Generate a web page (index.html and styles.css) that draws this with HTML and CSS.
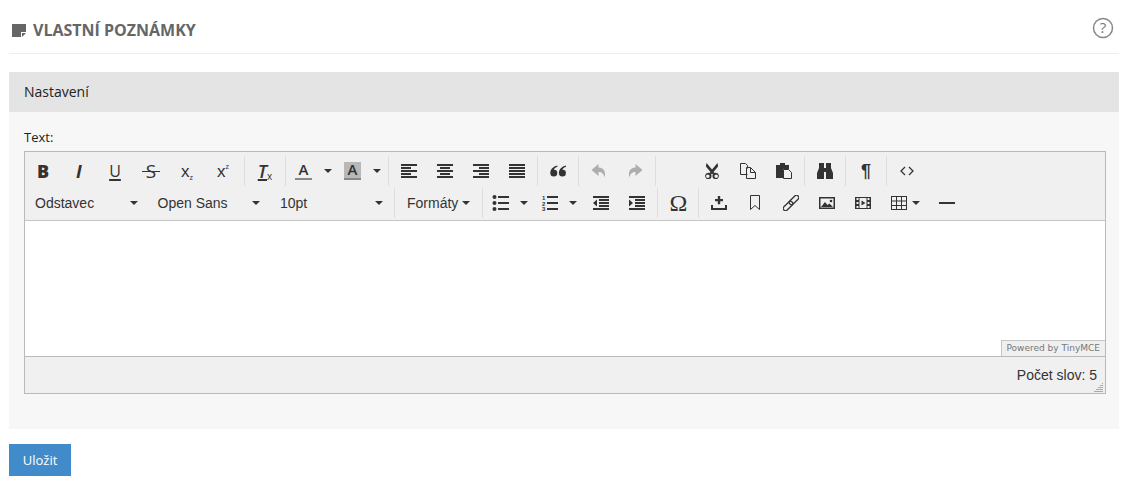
FILE: index.html
```html
<!DOCTYPE html>
<html lang="cs">
<head>
    <meta charset="UTF-8">
    <title>Vlastní poznámky</title>
    <link rel="stylesheet" href="styles.css">
</head>
<body>
    <!-- icons -->
    <svg class="iconDefs">
        <symbol id="i-left" viewBox="0 0 16 16"><path d="M0 1h16v2H0zM0 4h10v2H0zM0 7h16v2H0zM0 10h10v2H0zM0 13h16v2H0z"/></symbol>
        <symbol id="i-center" viewBox="0 0 16 16"><path d="M0 1h16v2H0zM3 4h10v2H3zM0 7h16v2H0zM3 10h10v2H3zM0 13h16v2H0z"/></symbol>
        <symbol id="i-right" viewBox="0 0 16 16"><path d="M0 1h16v2H0zM6 4h10v2H6zM0 7h16v2H0zM6 10h10v2H6zM0 13h16v2H0z"/></symbol>
        <symbol id="i-justify" viewBox="0 0 16 16"><path d="M0 1h16v2H0zM0 4h16v2H0zM0 7h16v2H0zM0 10h16v2H0zM0 13h16v2H0z"/></symbol>
        <symbol id="i-quote" viewBox="0 0 16 16"><path d="M7.400 2.500C3 3.500.3 6.500.3 10a3.500 3.500 0 1 0 7 0 3.300 3.300 0 0 0-3.500-3.300C4.300 5.400 5.700 4.400 7.400 3.800zM16 2.500c-4.400 1-7.100 4-7.100 7.500a3.500 3.500 0 1 0 7 0 3.300 3.300 0 0 0-3.500-3.300c.5-1.300 1.900-2.300 3.600-2.900z"/></symbol>
        <symbol id="i-undo" viewBox="0 0 16 16"><path d="M7.500 1 .5 7l7 6V9c3.500 0 5 1.500 6 5.500 1.500-5 0-9.500-6-10z"/></symbol>
        <symbol id="i-redo" viewBox="0 0 16 16"><path d="M8.500 1l7 6-7 6V9c-3.500 0-5 1.500-6 5.500-1.500-5 0-9.500 6-10z"/></symbol>
        <symbol id="i-cut" viewBox="0 0 16 16"><path d="M2.500 0 8 6.500 13.500 0l.6 3.500L9.500 9l1 1.100a3.200 3.200 0 1 1-1.600 1.400L8 10.500l-.9 1a3.200 3.200 0 1 1-1.600-1.400l1-1.100L1.900 3.500zM3.800 11.500a1.800 1.800 0 1 0 0 3.600 1.800 1.800 0 0 0 0-3.600zm8.400 0a1.800 1.800 0 1 0 0 3.600 1.800 1.800 0 0 0 0-3.600z"/></symbol>
        <symbol id="i-copy" viewBox="0 0 16 16"><path fill="none" stroke="#333" d="M.5.500h5l2 2v3M7.500 11.500H.5V.500M6.500 4.500h4l5 5v6h-9zM10.500 4.500v5h5"/></symbol>
        <symbol id="i-paste" viewBox="0 0 16 16"><path d="M0 2h4V0h5v2h4v4H7v9H0z"/><path fill="#f0f0f0" stroke="#333" d="M7.500 6.500h5l3 3v6h-8z"/></symbol>
        <symbol id="i-find" viewBox="0 0 16 16"><path d="M2 0h5v5h2V0h5v5l2 5v6H9V9H7v7H0v-6l2-5z"/></symbol>
        <symbol id="i-code" viewBox="0 0 16 16"><path fill="none" stroke="#333" stroke-width="1.300" d="M6 4 2 8l4 4M10 4l4 4-4 4"/></symbol>
        <symbol id="i-bullist" viewBox="0 0 20 16"><path d="M7 1h11v2H7zM7 7h11v2H7zM7 13h11v2H7z"/><circle cx="3.500" cy="2" r="2"/><circle cx="3.500" cy="8" r="2"/><circle cx="3.500" cy="14" r="2"/></symbol>
        <symbol id="i-numlist" viewBox="0 0 20 16"><path d="M7 1h11v2H7zM7 7h11v2H7zM7 13h11v2H7z"/><text x="2" y="5" font-size="6" font-family="Liberation Sans" font-weight="700">1</text><text x="2" y="10.500" font-size="6" font-family="Liberation Sans" font-weight="700">2</text><text x="2" y="16" font-size="6" font-family="Liberation Sans" font-weight="700">3</text></symbol>
        <symbol id="i-outdent" viewBox="0 0 16 16"><path d="M0 1h16v2H0zM6 4h10v2H6zM6 7h10v2H6zM6 10h10v2H6zM0 13h16v2H0zM4 4.500v7L0 8z"/></symbol>
        <symbol id="i-indent" viewBox="0 0 16 16"><path d="M0 1h16v2H0zM6 4h10v2H6zM6 7h10v2H6zM6 10h10v2H6zM0 13h16v2H0zM0 4.500v7L4 8z"/></symbol>
        <symbol id="i-insert" viewBox="0 0 16 16"><path d="M6.800 1h2.400v3H12v2.200H9.200v3H6.800v-3H4V4h2.800zM0 10h2v3h12v-3h2v5H0z"/></symbol>
        <symbol id="i-bookmark" viewBox="0 0 16 16"><path fill="none" stroke="#333" d="M3.500.500h9v14L8 10.500l-4.500 4z"/></symbol>
        <symbol id="i-link" viewBox="0 0 16 16"><g fill="none" stroke="#333" stroke-width="1.300" transform="rotate(-45 8 8)"><rect x="-2" y="5.700" width="11.500" height="4.600" rx="2.300"/><rect x="6.500" y="5.700" width="11.500" height="4.600" rx="2.300"/></g></symbol>
        <symbol id="i-image" viewBox="0 0 16 16"><path fill-rule="evenodd" d="M0 2h16v12H0zM1.500 3.500v9h13v-9z"/><path d="M2 12l4-5 2.500 3 2-1.500 3.500 3.500z"/><circle cx="12" cy="6" r="1.300"/></symbol>
        <symbol id="i-media" viewBox="0 0 16 16"><path fill-rule="evenodd" d="M0 2h16v12H0zM1.500 3v2h2V3zM1.500 7v2h2V7zM1.500 11v2h2v-2zM12.500 3v2h2V3zM12.500 7v2h2V7zM12.500 11v2h2v-2zM4.500 3v10h7V3z"/><path d="M6.500 5.500v5l4-2.500z"/></symbol>
        <symbol id="i-table" viewBox="0 0 16 16"><path fill-rule="evenodd" d="M0 1h16v14H0zM1 2v3.500h4V2zM6 2v3.500h4V2zM11 2v3.500h4V2zM1 6.500V10h4V6.500zM6 6.500V10h4V6.500zM11 6.500V10h4V6.500zM1 11v3h4v-3zM6 11v3h4v-3zM11 11v3h4v-3z"/></symbol>
        <symbol id="i-hr" viewBox="0 0 16 16"><path d="M0 7h16v2H0z"/></symbol>
    </svg>

    <div class="pageHead">
        <h1 class="pageTitle">
            <svg class="noteIcon" viewBox="0 0 14 14"><path fill="#666" d="M0 1h14v8h-5v5H0z"/><path fill="#666" d="M10 10h4l-4 4z"/></svg>
            VLASTNÍ POZNÁMKY
        </h1>
        <svg class="helpIcon" viewBox="0 0 22 22">
            <circle cx="11" cy="11" r="9.500" fill="none" stroke="#888" stroke-width="1.500"/>
            <text x="11" y="16" text-anchor="middle" font-size="15" font-family="Open Sans" fill="#777">?</text>
        </svg>
    </div>

    <div class="panel">
        <div class="panelHead">Nastavení</div>
        <div class="panelBody">
            <label class="fieldLabel">Text:</label>

            <div class="editor">
                <div class="toolbar">
                    <div class="tbRow">
                        <div class="tbGroup first">
                            <span class="tbBtn letter bold">B</span>
                            <span class="tbBtn letter italic">I</span>
                            <span class="tbBtn letter under">U</span>
                            <span class="tbBtn letter strike"><span class="strikeText">S</span></span>
                            <span class="tbBtn script">x<sub>z</sub></span>
                            <span class="tbBtn script">x<sup>z</sup></span>
                        </div>
                        <div class="tbGroup">
                            <span class="tbBtn letter clear"><i>T</i><sub>x</sub></span>
                        </div>
                        <div class="tbGroup">
                            <span class="tbBtn color"><span class="swatch">A</span></span><span class="caretBtn"></span>
                            <span class="tbBtn color"><span class="swatch marked">A</span></span><span class="caretBtn"></span>
                        </div>
                        <div class="tbGroup">
                            <span class="tbBtn"><svg class="ic"><use href="#i-left"/></svg></span>
                            <span class="tbBtn"><svg class="ic"><use href="#i-center"/></svg></span>
                            <span class="tbBtn"><svg class="ic"><use href="#i-right"/></svg></span>
                            <span class="tbBtn"><svg class="ic"><use href="#i-justify"/></svg></span>
                        </div>
                        <div class="tbGroup">
                            <span class="tbBtn"><svg class="ic"><use href="#i-quote"/></svg></span>
                        </div>
                        <div class="tbGroup">
                            <span class="tbBtn off"><svg class="ic"><use href="#i-undo"/></svg></span>
                            <span class="tbBtn off"><svg class="ic"><use href="#i-redo"/></svg></span>
                        </div>
                        <div class="tbGroup">
                            <span class="tbBtn"></span>
                            <span class="tbBtn"><svg class="ic"><use href="#i-cut"/></svg></span>
                            <span class="tbBtn"><svg class="ic"><use href="#i-copy"/></svg></span>
                            <span class="tbBtn"><svg class="ic"><use href="#i-paste"/></svg></span>
                        </div>
                        <div class="tbGroup">
                            <span class="tbBtn"><svg class="ic"><use href="#i-find"/></svg></span>
                        </div>
                        <div class="tbGroup">
                            <span class="tbBtn letter pilcrow">¶</span>
                        </div>
                        <div class="tbGroup last">
                            <span class="tbBtn"><svg class="ic"><use href="#i-code"/></svg></span>
                        </div>
                    </div>

                    <div class="tbRow">
                        <div class="tbGroup selects">
                            <span class="tbSelect">Odstavec</span>
                            <span class="tbSelect">Open Sans</span>
                            <span class="tbSelect">10pt</span>
                        </div>
                        <div class="tbGroup">
                            <span class="tbMenu">Formáty</span>
                        </div>
                        <div class="tbGroup">
                            <span class="tbBtn list"><svg class="ic wide"><use href="#i-bullist"/></svg></span><span class="caretBtn"></span>
                            <span class="tbBtn list"><svg class="ic wide"><use href="#i-numlist"/></svg></span><span class="caretBtn"></span>
                            <span class="tbBtn"><svg class="ic"><use href="#i-outdent"/></svg></span>
                            <span class="tbBtn"><svg class="ic"><use href="#i-indent"/></svg></span>
                        </div>
                        <div class="tbGroup">
                            <span class="tbBtn letter omega">Ω</span>
                        </div>
                        <div class="tbGroup last">
                            <span class="tbBtn"><svg class="ic"><use href="#i-insert"/></svg></span>
                            <span class="tbBtn"><svg class="ic"><use href="#i-bookmark"/></svg></span>
                            <span class="tbBtn"><svg class="ic"><use href="#i-link"/></svg></span>
                            <span class="tbBtn"><svg class="ic"><use href="#i-image"/></svg></span>
                            <span class="tbBtn"><svg class="ic"><use href="#i-media"/></svg></span>
                            <span class="tbBtn tableBtn"><svg class="ic"><use href="#i-table"/></svg><span class="caret"></span></span>
                            <span class="tbBtn"><svg class="ic"><use href="#i-hr"/></svg></span>
                        </div>
                    </div>
                </div>

                <div class="editArea">
                    <span class="branding">Powered by TinyMCE</span>
                </div>

                <div class="statusBar">
                    <span>Počet slov: 5</span>
                    <svg class="resize" viewBox="0 0 10 10"><path fill="#aaa" d="M8 1h1v1H8zM6 3h3v1H6zM4 5h5v1H4zM2 7h7v1H2zM0 9h9v1H0z"/></svg>
                </div>
            </div>
        </div>
    </div>

    <button class="saveBtn">Uložit</button>
</body>
</html>
```

FILE: styles.css
```css
body {
    margin: 0;
    padding: 0 5px 0 9px;
    font-family: "Open Sans", sans-serif;
    font-size: 13px;
    color: #222;
    background-color: white;
}

.iconDefs {
    display: none;
}

.pageHead {
    display: flex;
    justify-content: space-between;
    align-items: center;
    height: 53px;
    border-bottom: 1px solid #eee;
    margin-bottom: 18px;
}

.pageTitle {
    display: flex;
    align-items: center;
    gap: 7px;
    margin: 6px 0 0 3px;
    font-size: 16px;
    font-weight: 700;
    color: #666;
}

.noteIcon {
    width: 14px;
    height: 14px;
}

.helpIcon {
    width: 22px;
    height: 22px;
    margin: 3px 5px 0 0;
}

.panel {
    background-color: #f7f7f7;
}

.panelHead {
    height: 40px;
    line-height: 40px;
    padding-left: 15px;
    font-size: 14px;
    background-color: #e4e4e4;
}

.panelBody {
    padding: 15px 13px 35px 15px;
}

.fieldLabel {
    display: block;
    height: 24px;
    line-height: 20px;
    font-size: 13px;
}

.editor {
    border: 1px solid #b9b9b9;
    background-color: #f0f0f0;
    font-family: "Liberation Sans", Arial, sans-serif;
    color: #333;
}

.toolbar {
    padding-top: 4px;
    height: 64px;
    border-bottom: 1px solid #c5c5c5;
}

.tbRow {
    display: flex;
    height: 30px;
    margin-bottom: 2px;
}

.tbGroup {
    display: flex;
    align-items: center;
    padding: 0 2px;
    border-right: 1px solid #dedede;
}

.tbGroup.first {
    padding: 0 3px 0 0;
}

.tbGroup.last {
    border-right: none;
}

.tbGroup.selects {
    gap: 20px;
    padding: 0 0 0 10px;
}

.tbBtn {
    display: flex;
    justify-content: center;
    align-items: center;
    width: 36px;
    height: 30px;
    color: #333;
}

.tbBtn.off {
    opacity: 0.35;
}

.ic {
    width: 16px;
    height: 16px;
    fill: #333;
}

.ic.wide {
    width: 20px;
}

.letter {
    font-family: "Open Sans", sans-serif;
    font-size: 18px;
}

.bold {
    font-weight: 800;
}

.italic {
    font-style: italic;
    font-weight: 700;
}

.under {
    font-size: 16px;
    text-decoration: underline;
    text-decoration-thickness: 2px;
    text-underline-offset: 2px;
}

/* the line runs wider than the letter */
.strikeText {
    position: relative;
    font-size: 19px;
}

.strikeText::after {
    content: "";
    position: absolute;
    left: -4px;
    right: -4px;
    top: 50%;
    height: 1px;
    background-color: #333;
}

.script {
    font-size: 17px;
    font-weight: 300;
    line-height: 1;
}

.script sub,
.script sup {
    font-size: 7px;
    font-weight: 400;
    line-height: 1;
}

.script sub {
    margin-top: 12px;
}

.script sup {
    margin-top: -10px;
}

.clear {
    line-height: 1;
}

.clear i {
    font-weight: 600;
    text-decoration: underline;
    text-decoration-thickness: 2px;
}

.clear sub {
    margin-top: 10px;
    font-size: 10px;
    line-height: 1;
}

.color {
    width: 31px;
}

.swatch {
    width: 17px;
    height: 16px;
    line-height: 15px;
    text-align: center;
    border-bottom: 2px solid #888;
    font-family: "Open Sans", sans-serif;
    font-size: 15px;
    font-weight: 600;
}

.swatch.marked {
    background-color: #b8b8b8;
}

.caretBtn {
    display: flex;
    justify-content: center;
    align-items: center;
    width: 18px;
    height: 30px;
}

.caretBtn::after,
.caret,
.tbSelect::after,
.tbMenu::after {
    content: "";
    display: inline-block;
    border-top: 4px solid #333;
    border-left: 4px solid transparent;
    border-right: 4px solid transparent;
}

.list {
    width: 32px;
}

.list + .caretBtn {
    margin: 0 1px 0 -2px;
}

.tableBtn {
    width: 48px;
    gap: 5px;
}

.tbSelect {
    display: flex;
    justify-content: space-between;
    align-items: center;
    width: 102.5px;
    height: 30px;
    font-size: 14px;
}

.tbSelect:last-child {
    margin-right: 11.5px;
}

.tbMenu {
    display: flex;
    align-items: center;
    gap: 4px;
    padding: 0 10px;
    height: 30px;
    font-size: 14px;
}

.pilcrow {
    font-family: "Liberation Sans", sans-serif;
    font-weight: 700;
}

.omega {
    font-family: "Liberation Serif", serif;
    font-size: 24px;
}

.editArea {
    position: relative;
    height: 135px;
    background-color: white;
    border-bottom: 1px solid #b9b9b9;
}

.branding {
    position: absolute;
    right: 0;
    bottom: 0;
    padding: 0 5px 0 4px;
    height: 15px;
    line-height: 15px;
    border-top: 1px solid #c5c5c5;
    border-left: 1px solid #c5c5c5;
    background-color: #f0f0f0;
    font-family: "DejaVu Sans", sans-serif;
    font-size: 9px;
    color: #777;
}

.statusBar {
    position: relative;
    display: flex;
    justify-content: flex-end;
    align-items: center;
    height: 36px;
    padding-right: 8px;
    font-size: 14px;
}

.resize {
    position: absolute;
    right: 1px;
    bottom: 1px;
    width: 10px;
    height: 10px;
}

.saveBtn {
    display: block;
    margin-top: 15px;
    width: 62px;
    height: 32px;
    padding: 0;
    border: none;
    background-color: #428bca;
    color: white;
    font-family: "Open Sans", sans-serif;
    font-size: 13px;
}
```
